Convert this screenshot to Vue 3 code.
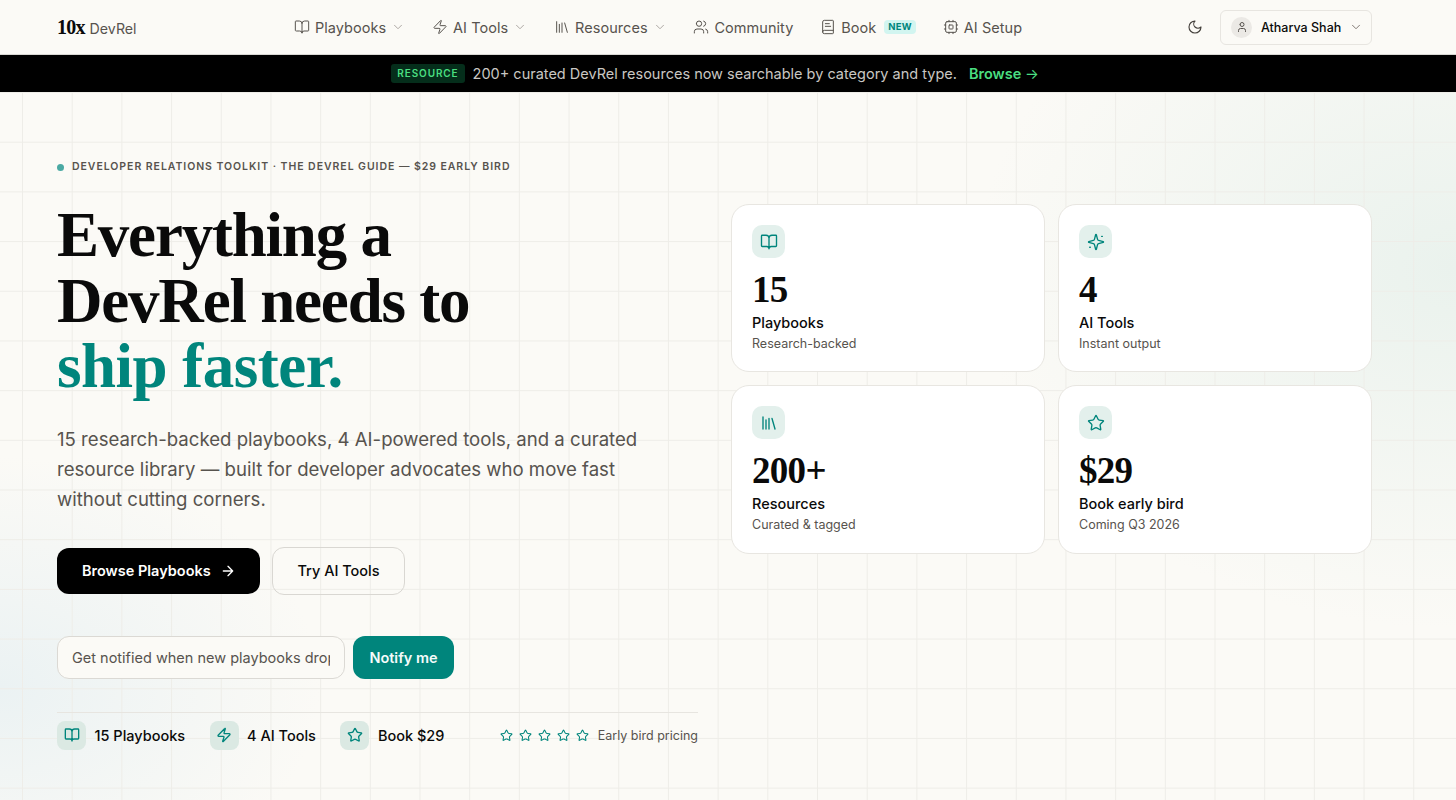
<template>
  <div class="page">
    <header class="nav">
      <a class="logo"><span class="logo-mark">10x</span><span class="logo-text">DevRel</span></a>
      <nav class="links">
        <a v-for="link in links" :key="link.label" class="link">
          <svg class="ico link-ico" viewBox="0 0 24 24"><path :d="icons[link.icon]" /></svg>
          <span>{{ link.label }}</span>
          <span v-if="link.badge" class="new-badge">{{ link.badge }}</span>
          <svg v-if="link.menu" class="ico chev" viewBox="0 0 24 24"><path :d="icons.chevron" /></svg>
        </a>
      </nav>
      <div class="nav-right">
        <svg class="ico moon" viewBox="0 0 24 24"><path :d="icons.moon" /></svg>
        <button class="user">
          <span class="avatar"><svg class="ico" viewBox="0 0 24 24"><path :d="icons.user" /></svg></span>
          <span class="user-name">Atharva Shah</span>
          <svg class="ico chev" viewBox="0 0 24 24"><path :d="icons.chevron" /></svg>
        </button>
      </div>
    </header>

    <div class="banner">
      <span class="banner-tag">RESOURCE</span>
      <span class="banner-text">200+ curated DevRel resources now searchable by category and type.</span>
      <a class="banner-link">Browse <span class="banner-arrow">→</span></a>
    </div>

    <main class="hero">
      <section class="intro">
        <p class="eyebrow"><i class="dot"></i>DEVELOPER RELATIONS TOOLKIT · THE DEVREL GUIDE — $29 EARLY BIRD</p>
        <h1 class="title">Everything a<br />DevRel needs to<br /><em>ship faster.</em></h1>
        <p class="lead">15 research-backed playbooks, 4 AI-powered tools, and a curated resource library — built for developer advocates who move fast without cutting corners.</p>
        <div class="actions">
          <button class="btn-dark">Browse Playbooks
            <svg class="ico" viewBox="0 0 24 24"><path :d="icons.arrow" /></svg>
          </button>
          <button class="btn-ghost">Try AI Tools</button>
        </div>
        <form class="notify" @submit.prevent>
          <input class="notify-input" type="text" placeholder="Get notified when new playbooks drop" />
          <button class="notify-btn">Notify me</button>
        </form>
        <div class="summary">
          <div v-for="item in summary" :key="item.label" class="summary-item">
            <span class="summary-ico"><svg class="ico" viewBox="0 0 24 24"><path :d="icons[item.icon]" /></svg></span>
            <span>{{ item.label }}</span>
          </div>
          <div class="rating">
            <svg v-for="n in 5" :key="n" class="ico" viewBox="0 0 24 24"><path :d="icons.star" /></svg>
            <span class="rating-text">Early bird pricing</span>
          </div>
        </div>
      </section>

      <section class="cards">
        <article v-for="card in cards" :key="card.name" class="card">
          <span class="card-ico"><svg class="ico" viewBox="0 0 24 24"><path :d="icons[card.icon]" /></svg></span>
          <div class="card-num">{{ card.num }}</div>
          <div class="card-name">{{ card.name }}</div>
          <div class="card-sub">{{ card.sub }}</div>
        </article>
      </section>
    </main>
  </div>
</template>

<script setup>
const icons = {
  book: 'M12 7v14M3 18a1 1 0 0 1-1-1V4a1 1 0 0 1 1-1h5a4 4 0 0 1 4 4 4 4 0 0 1 4-4h5a1 1 0 0 1 1 1v13a1 1 0 0 1-1 1h-6a3 3 0 0 0-3 3 3 3 0 0 0-3-3z',
  zap: 'M4 14a1 1 0 0 1-.78-1.63l9.9-10.2a.5.5 0 0 1 .86.46l-1.92 6.02A1 1 0 0 0 13 10h7a1 1 0 0 1 .78 1.63l-9.9 10.2a.5.5 0 0 1-.86-.46l1.92-6.02A1 1 0 0 0 11 14z',
  library: 'm16 6 4 14M12 6v14M8 8v12M4 4v16',
  users: 'M16 21v-2a4 4 0 0 0-4-4H6a4 4 0 0 0-4 4v2M5 7a4 4 0 1 0 8 0 4 4 0 1 0-8 0M22 21v-2a4 4 0 0 0-3-3.87M16 3.13a4 4 0 0 1 0 7.75',
  bookText: 'M4 19.5v-15A2.5 2.5 0 0 1 6.5 2H19a1 1 0 0 1 1 1v18a1 1 0 0 1-1 1H6.5a1 1 0 0 1 0-5H20M8 7h6M8 11h8',
  cpu: 'M6 4h12a2 2 0 0 1 2 2v12a2 2 0 0 1-2 2H6a2 2 0 0 1-2-2V6a2 2 0 0 1 2-2zM10 9h4a1 1 0 0 1 1 1v4a1 1 0 0 1-1 1h-4a1 1 0 0 1-1-1v-4a1 1 0 0 1 1-1zM15 2v2M15 20v2M2 15h2M2 9h2M20 15h2M20 9h2M9 2v2M9 20v2',
  moon: 'M12 3a6 6 0 0 0 9 9 9 9 0 1 1-9-9Z',
  user: 'M19 21v-2a4 4 0 0 0-4-4H9a4 4 0 0 0-4 4v2M8 7a4 4 0 1 0 8 0 4 4 0 1 0-8 0',
  chevron: 'm6 9 6 6 6-6',
  arrow: 'M5 12h14M12 5l7 7-7 7',
  star: 'M11.525 2.295a.53.53 0 0 1 .95 0l2.31 4.679a2.123 2.123 0 0 0 1.595 1.16l5.166.756a.53.53 0 0 1 .294.904l-3.736 3.638a2.123 2.123 0 0 0-.611 1.878l.882 5.14a.53.53 0 0 1-.771.56l-4.618-2.428a2.122 2.122 0 0 0-1.973 0L6.396 21.01a.53.53 0 0 1-.77-.56l.881-5.139a2.122 2.122 0 0 0-.611-1.879L2.16 9.795a.53.53 0 0 1 .294-.906l5.165-.755a2.122 2.122 0 0 0 1.597-1.16z',
  sparkle: 'M9.937 15.5A2 2 0 0 0 8.5 14.063l-6.135-1.582a.5.5 0 0 1 0-.962L8.5 9.936A2 2 0 0 0 9.937 8.5l1.582-6.135a.5.5 0 0 1 .963 0L14.063 8.5A2 2 0 0 0 15.5 9.937l6.135 1.581a.5.5 0 0 1 0 .964L15.5 14.063a2 2 0 0 0-1.437 1.437l-1.582 6.135a.5.5 0 0 1-.963 0zM19.6 4.5h.8M3.6 19h.8'
}

const links = [
  { label: 'Playbooks', icon: 'book', menu: true },
  { label: 'AI Tools', icon: 'zap', menu: true },
  { label: 'Resources', icon: 'library', menu: true },
  { label: 'Community', icon: 'users' },
  { label: 'Book', icon: 'bookText', badge: 'NEW' },
  { label: 'AI Setup', icon: 'cpu' }
]

const summary = [
  { label: '15 Playbooks', icon: 'book' },
  { label: '4 AI Tools', icon: 'zap' },
  { label: 'Book $29', icon: 'star' }
]

const cards = [
  { num: '15', name: 'Playbooks', sub: 'Research-backed', icon: 'book' },
  { num: '4', name: 'AI Tools', sub: 'Instant output', icon: 'sparkle' },
  { num: '200+', name: 'Resources', sub: 'Curated & tagged', icon: 'library' },
  { num: '$29', name: 'Book early bird', sub: 'Coming Q3 2026', icon: 'star' }
]
</script>

<style>
html, body {
  margin: 0;
  background: #fbfaf6;
}
</style>

<style scoped>
.page {
  height: 800px;
  overflow: hidden;
  font-family: Inter, "Liberation Sans", sans-serif;
  color: #0a0a0a;
  display: flex;
  flex-direction: column;
}
.ico {
  width: 16px;
  height: 16px;
  fill: none;
  stroke: currentColor;
  stroke-width: 2;
  stroke-linecap: round;
  stroke-linejoin: round;
  flex-shrink: 0;
}

/* nav */
.nav {
  height: 54px;
  box-sizing: content-box;
  border-bottom: 1px solid #d9d8d4;
  background: #fbfaf6;
  display: flex;
  align-items: center;
  padding: 0 84px 0 57px;
}
.logo {
  display: flex;
  align-items: baseline;
  gap: 5px;
  width: 237px;
}
.logo-mark {
  font-family: "Liberation Serif", serif;
  font-weight: 700;
  font-size: 20px;
  letter-spacing: -0.8px;
  color: #0a0a0a;
}
.logo-text {
  font-size: 14.2px;
  font-weight: 400;
  color: #57534e;
}
.links {
  display: flex;
  align-items: center;
  gap: 26.8px;
  flex: 1;
}
.link {
  display: flex;
  align-items: center;
  gap: 5px;
  font-size: 14.5px;
  letter-spacing: 0.05px;
  color: #57534e;
  white-space: nowrap;
}
.link-ico {
  stroke-width: 1.5;
}
.chev {
  width: 14px;
  height: 14px;
  color: #a8a29e;
  stroke-width: 1.6;
}
.new-badge {
  font-size: 9.5px;
  font-weight: 700;
  letter-spacing: 0.3px;
  color: #00857c;
  background: #d2f5f0;
  border-radius: 4px;
  padding: 2px 4px;
  line-height: 10px;
  margin-left: 3px;
}
.nav-right {
  display: flex;
  align-items: center;
  gap: 17px;
}
.moon {
  color: #44403c;
  stroke-width: 1.7;
}
.user {
  display: flex;
  align-items: center;
  gap: 9px;
  height: 35px;
  box-sizing: border-box;
  width: 152px;
  padding: 0 10px;
  border: 1px solid #e7e5e0;
  border-radius: 6px;
  background: transparent;
  font-family: inherit;
}
.avatar {
  width: 21px;
  height: 21px;
  flex-shrink: 0;
  border-radius: 50%;
  background: #ebe9e5;
  color: #57534e;
  display: flex;
  align-items: center;
  justify-content: center;
}
.avatar .ico {
  width: 12px;
  height: 12px;
}
.user-name {
  font-size: 12.5px;
  font-weight: 500;
  color: #0a0a0a;
  white-space: nowrap;
}
.user .chev {
  color: #78716c;
  margin-left: -1px;
}

/* banner */
.banner {
  height: 37px;
  background: #000;
  display: flex;
  align-items: center;
  justify-content: center;
  gap: 8px;
  padding-right: 26px;
  font-size: 14.5px;
}
.banner-tag {
  font-size: 10px;
  font-weight: 600;
  letter-spacing: 0.9px;
  color: #4ade80;
  background: #052e1b;
  border-radius: 3px;
  padding: 3px 6px;
  line-height: 13px;
}
.banner-text {
  color: #c9c7c3;
}
.banner-link {
  color: #4ade80;
  font-weight: 600;
  margin-left: 4px;
}
.banner-arrow {
  font-weight: 400;
}

/* hero */
.hero {
  flex: 1;
  display: grid;
  grid-template-columns: 641px 641px;
  column-gap: 33px;
  padding: 0 84px 0 57px;
  align-items: start;
  background-color: #fbfaf6;
  background-image:
    linear-gradient(#eeede8 1px, transparent 1px),
    linear-gradient(90deg, #eeede8 1px, transparent 1px),
    radial-gradient(ellipse 480px 360px at 100% 25%, #eaf2ed 0%, rgba(234, 242, 237, 0) 100%),
    radial-gradient(ellipse 320px 230px at 0% 84%, #ebf2f3 0%, rgba(235, 242, 243, 0) 100%);
  background-size: 49.7px 49.7px, 49.7px 49.7px, auto, auto;
  background-position: 22px 0, 22px 0, 0 0, 0 0;
}
.intro {
  display: flex;
  flex-direction: column;
  padding-top: 68px;
}
.eyebrow {
  display: flex;
  align-items: center;
  gap: 8px;
  margin: 0;
  font-size: 10.5px;
  font-weight: 600;
  letter-spacing: 0.95px;
  color: #57534e;
  line-height: 14px;
  white-space: nowrap;
}
.dot {
  width: 7px;
  height: 7px;
  border-radius: 50%;
  background: #4aa9a3;
}
.title {
  margin: 29px 0 0;
  font-family: "Liberation Serif", serif;
  font-weight: 700;
  font-size: 63px;
  line-height: 65.5px;
  letter-spacing: -1.2px;
  color: #0a0a0a;
}
.title em {
  font-style: normal;
  letter-spacing: -0.5px;
  color: #00857c;
}
.lead {
  margin: 24px 0 0;
  width: 620px;
  font-size: 18.6px;
  line-height: 30px;
  color: #57534e;
}
.actions {
  display: flex;
  align-items: center;
  gap: 12px;
  margin-top: 33px;
}
.btn-dark {
  display: flex;
  align-items: center;
  gap: 9px;
  height: 46px;
  width: 203px;
  padding: 0 25px;
  white-space: nowrap;
  background: #000;
  color: #fff;
  border: none;
  border-radius: 12px;
  font-family: inherit;
  font-size: 14.5px;
  font-weight: 600;
}
.btn-ghost {
  height: 48px;
  width: 133px;
  padding: 0;
  background: transparent;
  color: #0a0a0a;
  border: 1px solid #d9d7d2;
  border-radius: 12px;
  font-family: inherit;
  font-size: 14.5px;
  font-weight: 500;
}
.notify {
  display: flex;
  gap: 8px;
  margin-top: 41px;
}
.notify-input {
  width: 288px;
  height: 43px;
  box-sizing: border-box;
  padding: 0 14px;
  border: 1px solid #dbd9d4;
  border-radius: 12px;
  background: #fbfaf6;
  font-family: inherit;
  font-size: 14.5px;
  outline: none;
}
.notify-input::placeholder {
  color: #57534e;
  opacity: 1;
}
.notify-btn {
  width: 101px;
  height: 43px;
  border: none;
  border-radius: 12px;
  background: #00857c;
  color: #f4fbfa;
  font-family: inherit;
  font-size: 14.5px;
  font-weight: 600;
}
.summary {
  display: flex;
  align-items: center;
  margin-top: 33px;
  padding-top: 8px;
  border-top: 1px solid #e7e5e0;
}
.summary-item {
  display: flex;
  align-items: center;
  gap: 8.5px;
  font-size: 14.5px;
  font-weight: 500;
  margin-right: 24.5px;
  white-space: nowrap;
}
.summary-ico {
  width: 29px;
  height: 29px;
  border-radius: 8px;
  background: #dbe9e3;
  color: #00857c;
  display: flex;
  align-items: center;
  justify-content: center;
}
.rating {
  display: flex;
  align-items: center;
  gap: 6px;
  margin-left: auto;
  color: #00857c;
}
.rating .ico {
  width: 13px;
  height: 13px;
  stroke-width: 1.9;
}
.rating-text {
  font-size: 12.5px;
  color: #57534e;
  margin-left: 2.5px;
  white-space: nowrap;
}

/* stat cards */
.cards {
  display: grid;
  grid-template-columns: 1fr 1fr;
  grid-template-rows: 168px 169px;
  gap: 13px;
  margin-top: 112px;
}
.card {
  box-sizing: border-box;
  padding: 20px;
  background: #fff;
  border: 1px solid #e8e6e1;
  border-radius: 18px;
}
.card-ico {
  width: 33px;
  height: 33px;
  border-radius: 10px;
  background: #e3f0ec;
  color: #00857c;
  display: flex;
  align-items: center;
  justify-content: center;
}
.card-ico .ico {
  width: 18px;
  height: 18px;
  stroke-width: 1.8;
}
.card-num {
  margin-top: 13px;
  font-family: "Liberation Serif", serif;
  font-weight: 700;
  font-size: 37px;
  line-height: 38px;
  letter-spacing: -0.7px;
  color: #0a0a0a;
}
.card-name {
  margin-top: 4px;
  font-size: 14.5px;
  font-weight: 500;
  line-height: 20px;
}
.card-sub {
  margin-top: 2px;
  font-size: 12.5px;
  line-height: 18px;
  color: #57534e;
}
</style>
